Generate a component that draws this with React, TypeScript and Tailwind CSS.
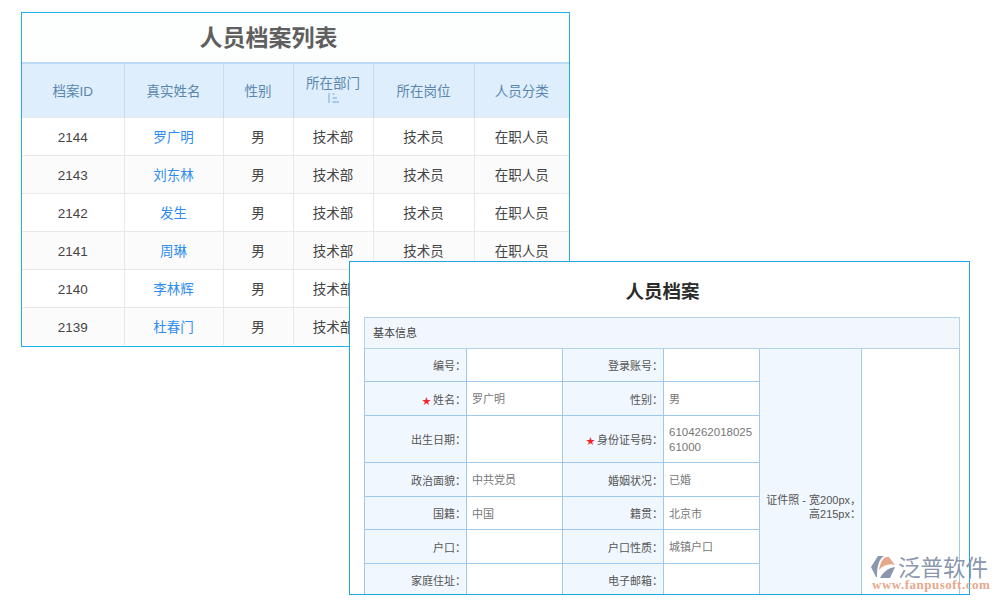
const font = { fontFamily: '"Liberation Sans", "Noto Sans CJK SC", sans-serif' };

const people = [
  { id: 2144, name: '罗广明' },
  { id: 2143, name: '刘东林' },
  { id: 2142, name: '发生' },
  { id: 2141, name: '周琳' },
  { id: 2140, name: '李林辉' },
  { id: 2139, name: '杜春门' },
];

const headers = ['档案ID', '真实姓名', '性别', '所在部门', '所在岗位', '人员分类'];
const widths = ['w-[102px]', 'w-[99px]', 'w-[70px]', 'w-[80px]', 'w-[101px]', 'w-[95px]'];

function SortIcon() {
  return (
    <svg width="12" height="10" viewBox="0 0 12 10" className="mx-auto mt-[1px] mb-[4px]" fill="none" stroke="#92bfe8" strokeWidth="1.4">
      <path d="M2 0V10M5.5 1H7.5M5.5 5H10M5.5 9H12" />
    </svg>
  );
}

function ListPanel() {
  return (
    <div className="w-[549px] h-[335px] border border-[#1cb0ea] bg-white overflow-hidden">
      <div className="h-[49px] pt-[1px] pr-[54px] flex items-center justify-center bg-[#fdfefe] text-[23px] font-bold text-[#5f5f5f]">
        人员档案列表
      </div>
      <table className="w-full table-fixed border-collapse">
        <thead>
          <tr className="h-[54px] bg-[#deeefc] border-t-2 border-[#bcdaf3]">
            {headers.map((h, i) => (
              <th key={h} className={`${widths[i]} p-0 pt-[2px] font-normal text-[13.5px] leading-[17px] text-[#5b86ad] border-l border-[#c6dcef] first:border-l-0`}>
                {h}
                {i === 3 && <SortIcon />}
              </th>
            ))}
          </tr>
        </thead>
        <tbody>
          {people.map((p, i) => (
            <tr key={p.id} className={`h-[38px] border-t border-[#e8e8e8] text-[13.5px] text-center text-[#444444] ${i % 2 ? 'bg-[#fbfbfb]' : 'bg-white'}`}>
              <td className="p-0 pt-[4px]">{p.id}</td>
              <td className="p-0 pt-[4px] border-l border-[#e8e8e8] text-[#2f8cf0]">{p.name}</td>
              <td className="p-0 pt-[4px] border-l border-[#e8e8e8]">男</td>
              <td className="p-0 pt-[4px] border-l border-[#e8e8e8]">技术部</td>
              <td className="p-0 pt-[4px] border-l border-[#e8e8e8]">技术员</td>
              <td className="p-0 pt-[4px] border-l border-[#e8e8e8]">在职人员</td>
            </tr>
          ))}
        </tbody>
      </table>
    </div>
  );
}

function Label({ text, required }: { text: string; required?: boolean }) {
  return (
    <td className="p-0 pt-[2px] text-right bg-[#f0f7fe] border border-[#9fc8ea] text-[#555555]">
      {required && <span className="text-[#f5222d] text-[9px] leading-none mr-[2px]">★</span>}
      {text}
      {text && '：'}
    </td>
  );
}

function Value({ text, digits }: { text?: string; digits?: boolean }) {
  return (
    <td className={`p-0 pt-[2px] px-[5px] border border-[#9fc8ea] text-[#777777] break-all leading-[15px] ${digits ? 'text-[11.5px]' : 'text-[11px]'}`}>
      {text}
    </td>
  );
}

const formRows = [
  { h: 'h-[33px]', a: '编号', b: '', c: '登录账号', d: '' },
  { h: 'h-[34px]', a: '姓名', b: '罗广明', c: '性别', d: '男', ra: true },
  { h: 'h-[47px]', a: '出生日期', b: '', c: '身份证号码', d: '610426201802561000', rc: true },
  { h: 'h-[34px]', a: '政治面貌', b: '中共党员', c: '婚姻状况', d: '已婚' },
  { h: 'h-[33px]', a: '国籍', b: '中国', c: '籍贯', d: '北京市' },
  { h: 'h-[34px]', a: '户口', b: '', c: '户口性质', d: '城镇户口' },
  { h: 'h-[33px]', a: '家庭住址', b: '', c: '电子邮箱', d: '' },
  // rest of the form runs off the bottom of the window
  { h: 'h-[34px]', a: '', b: '', c: '', d: '' },
  { h: 'h-[34px]', a: '', b: '', c: '', d: '' },
];

function FormPanel() {
  return (
    <div className="absolute left-[349px] top-[261px] w-[621px] h-[334px] border border-[#1ca7e0] bg-white overflow-hidden">
      <div className="h-[55px] pt-[16px] pl-[6px] text-center text-[18.5px] leading-[28px] font-bold text-[#2b2b2b]">人员档案</div>
      <table className="ml-[14px] w-[595px] table-fixed border-collapse text-[11px] leading-[14px]">
        <colgroup>
          <col className="w-[102px]" />
          <col className="w-[96px]" />
          <col className="w-[101px]" />
          <col className="w-[96px]" />
          <col className="w-[102px]" />
          <col className="w-[98px]" />
        </colgroup>
        <tbody>
          <tr className="h-[31px]">
            <td colSpan={6} className="p-0 pl-[8px] bg-[#f2f7fe] border border-[#b4d4ee] text-[#444444]">基本信息</td>
          </tr>
          {formRows.map((r, i) => (
            <tr key={i} className={r.h}>
              <Label text={r.a} required={r.ra} />
              <Value text={r.b} />
              <Label text={r.c} required={r.rc} />
              <Value text={r.d} digits={r.rc} />
              {i === 0 && (
                <>
                  <td rowSpan={9} className="p-0 text-right whitespace-nowrap bg-[#f0f7fe] border border-[#9fc8ea] text-[#555555]">
                    证件照 - 宽200px，
                    <br />
                    高215px：
                  </td>
                  <td rowSpan={9} className="p-0 border border-[#9fc8ea]" />
                </>
              )}
            </tr>
          ))}
        </tbody>
      </table>
    </div>
  );
}

function Logo() {
  return (
    <div className="absolute left-[870px] top-[554px] w-[122px]">
      <div className="flex items-center h-[26px]">
        <svg width="27" height="24" viewBox="0 0 27 24">
          <path d="M8 1H14C9 4 7 11 7 22H6L1 12Z" fill="#8a97ae" />
          <path d="M9 15C10 8 13 3 16 2H19L25 10C20 8 13 10 9 15Z" fill="#e6a88c" />
          <path d="M10 23C13 17 18 13 25 12L20 23Z" fill="#8a97ae" />
        </svg>
        <span className="ml-[1px] mt-[2px] text-[22.5px] leading-[23px] text-[#8a97ae] whitespace-nowrap">泛普软件</span>
      </div>
      <div className="mt-[-2px] ml-[2px] text-[13px] leading-[14px] tracking-[0.5px] font-bold text-[#e6a88c] whitespace-nowrap" style={{ fontFamily: '"Liberation Serif", serif' }}>
        www.fanpusoft.com
      </div>
    </div>
  );
}

export default function App() {
  return (
    <div className="relative w-[1000px] h-[600px] bg-white overflow-hidden" style={font}>
      <div className="pt-[12px] pl-[21px]">
        <ListPanel />
      </div>
      <FormPanel />
      <Logo />
    </div>
  );
}
